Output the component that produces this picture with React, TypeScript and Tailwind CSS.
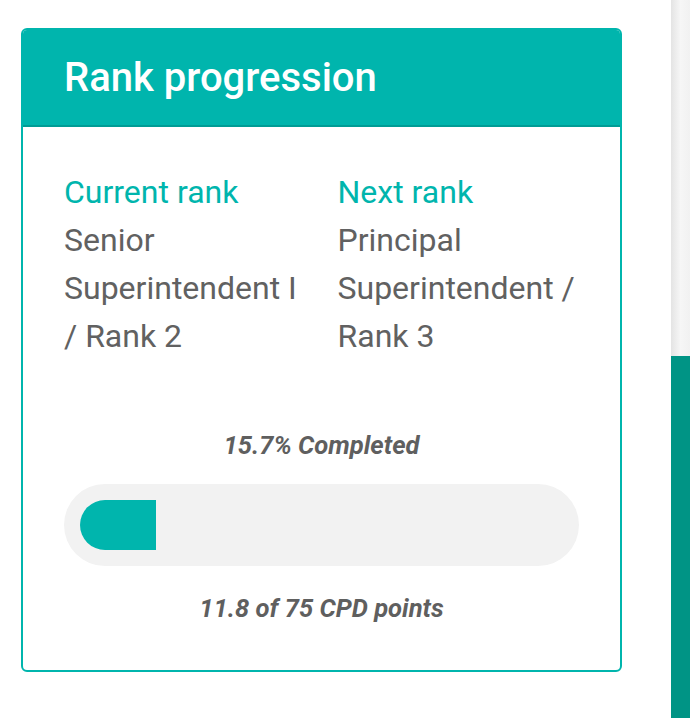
export default function App() {
  const percent = 15.7;

  return (
    <div className="flex h-[718px] w-[690px] bg-white font-['Roboto',sans-serif]">
      <div className="flex-1 pl-[21px] pr-[49px] pt-[28px]">
        <div className="overflow-hidden rounded-[6px] border-2 border-[#00b5ad] bg-white">
          <div className="h-[97px] border-b-2 border-[#009c95] bg-[#00b5ad] px-[41px] pt-[24px]">
            <h2 className="text-[40px] font-medium leading-[48px] text-white">Rank progression</h2>
          </div>

          <div className="px-[41px] pb-[46px] pt-[41px]">
            <div className="grid grid-cols-2 gap-x-8 text-[32px] leading-[48px]">
              <div>
                <div className="text-[#00b5ad]">Current rank</div>
                <div className="text-[#616161]">Senior Superintendent I / Rank 2</div>
              </div>
              <div>
                <div className="text-[#00b5ad]">Next rank</div>
                <div className="text-[#616161]">Principal Superintendent / Rank 3</div>
              </div>
            </div>

            <p className="mt-[69px] text-center text-[25.6px] font-bold italic leading-[32px] text-[#5f5f5f]">
              {percent}% Completed
            </p>

            <div className="mt-[23px] h-[82px] rounded-full bg-[#f2f2f2] p-[16px]">
              <div className="h-[50px] rounded-l-full bg-[#00b5ad]" style={{ width: `${percent}%` }} />
            </div>

            <p className="mt-[26px] text-center text-[25.6px] font-bold italic leading-[32px] text-[#5f5f5f]">
              11.8 of 75 CPD points
            </p>
          </div>
        </div>
      </div>

      <div className="flex w-[19px] flex-col">
        <div className="h-[356px] bg-gradient-to-r from-[#e4e4e4] via-[#f6f6f6] to-[#f1f1f1]" />
        <div className="flex-1 bg-[#009485]" />
      </div>
    </div>
  );
}
